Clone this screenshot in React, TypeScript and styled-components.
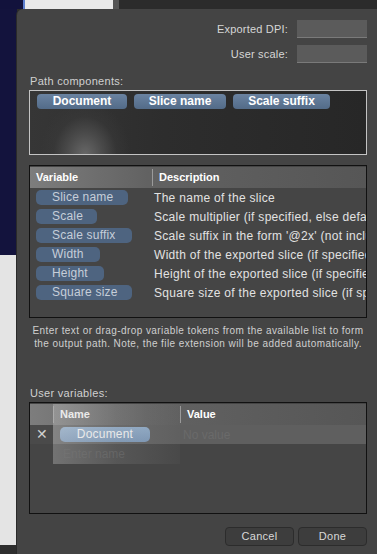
import React from "react";
import styled, {createGlobalStyle} from "styled-components";

const GlobalStyle = createGlobalStyle`
    *, *::before, *::after {box-sizing: border-box;}
    html, body {margin: 0; padding: 0; background: #e6e6e6;}
    body {font-family: "Liberation Sans", Arial, sans-serif;}
`;

const Screen = styled.div`
    width: 377px;
    height: 554px;
    overflow: hidden;
    display: flex;
    flex-direction: column;
    background: #2c2c2c;
`;
const TopStrip = styled.div`
    height: 9px;
    display: flex;
    flex-shrink: 0;
`;
const Segment = styled.div<{ $w?: number; $bg: string }>`
    ${p => p.$w ? `width: ${p.$w}px; flex-shrink: 0;` : 'flex: 1;'}
    background: ${p => p.$bg};
`;
const Body = styled.div`
    flex: 1;
    display: flex;
    min-height: 0;
`;
const LeftStrip = styled.div`
    width: 17px;
    flex-shrink: 0;
    display: flex;
    flex-direction: column;
`;
const StripPart = styled.div<{ $h?: number; $bg: string }>`
    ${p => p.$h ? `height: ${p.$h}px; flex-shrink: 0;` : 'flex: 1;'}
    background: ${p => p.$bg};
`;
const Panel = styled.div`
    flex: 1;
    background: #444444;
    border-top-left-radius: 6px;
    padding: 11px 10px 0 12px;
    display: flex;
    flex-direction: column;
    color: #d6d6d6;
    font-size: 11px;
    box-shadow: -1px 0 0 #2a2a2a;
`;
const FieldRow = styled.div`
    display: flex;
    justify-content: flex-end;
    align-items: center;
    gap: 9px;
    height: 18px;
    margin-bottom: 7px;
    letter-spacing: 0.2px;
`;
const FieldInput = styled.div`
    width: 70px;
    height: 18px;
    background: #5b5b5b;
    border-bottom: 1px solid #7a7a7a;
`;
const SectionLabel = styled.div<{ $top: number }>`
    margin-top: ${p => p.$top}px;
    margin-bottom: 2px;
    line-height: 13px;
    padding-left: 1px;
    color: #d0d0d0;
    letter-spacing: 0.3px;
`;
const PathBox = styled.div`
    height: 65px;
    border: 1px solid #c4c4c4;
    background: radial-gradient(ellipse 45px 55px at 55px 64px, #686868 0%, #4a4a4a 40%, rgba(60, 60, 60, 0.4) 70%, transparent 100%),
    linear-gradient(90deg, #363636 0%, #2d2d2d 40%, #272727 100%);
    padding: 3px 7px;
    display: flex;
    align-items: flex-start;
    gap: 7px;
`;
const PathToken = styled.div<{ $w: number }>`
    width: ${p => p.$w}px;
    height: 15px;
    border-radius: 4px;
    background: linear-gradient(180deg, #6a83a1 0%, #536b88 100%);
    color: #fff;
    font-weight: bold;
    font-size: 12px;
    line-height: 15px;
    text-align: center;
`;
const Table = styled.div<{ $h: number; $top: number }>`
    margin-top: ${p => p.$top}px;
    height: ${p => p.$h}px;
    flex-shrink: 0;
    border: 1px solid #111;
    background: #454545;
    position: relative;
    overflow: hidden;
    display: flex;
    flex-direction: column;
`;
const HeaderRow = styled.div<{ $cols: string }>`
    height: 21px;
    flex-shrink: 0;
    margin-top: 1px;
    display: grid;
    grid-template-columns: ${p => p.$cols};
    background: linear-gradient(90deg, #7d7d7d 0%, #626262 35%, #565656 100%);
    color: #fff;
    font-weight: bold;
    font-size: 11px;
`;
const HeadCell = styled.div<{ $divider?: boolean }>`
    padding-left: 6px;
    border-left: ${p => p.$divider ? '1px solid #9a9a9a' : 'none'};
    height: 17px;
    line-height: 17px;
    margin-top: 2px;
    white-space: nowrap;
`;
const VarRow = styled.div`
    height: 19px;
    flex-shrink: 0;
    display: grid;
    grid-template-columns: 122px 1fr;
    align-items: center;
    font-size: 12px;
    white-space: nowrap;
    overflow: hidden;
`;
const VarToken = styled.div<{ $w: number }>`
    margin-left: 6px;
    width: ${p => p.$w}px;
    height: 15px;
    border-radius: 5px;
    background: #4e6480;
    color: #c6ced9;
    line-height: 15px;
    padding-left: 16px;
    letter-spacing: 0.2px;
`;
const Desc = styled.div`
    color: #e2e2e2;
    padding-left: 2px;
    overflow: hidden;
    letter-spacing: 0.3px;
`;
const Help = styled.div`
    margin-top: 7px;
    height: 25px;
    text-align: center;
    font-size: 10px;
    line-height: 12.5px;
    color: #cfcfcf;
    letter-spacing: 0.42px;
    white-space: nowrap;
`;
const UserRow = styled.div`
    height: 19px;
    flex-shrink: 0;
    display: grid;
    grid-template-columns: 23px 1fr;
    align-items: center;
`;
const RemoveCell = styled.div`
    height: 19px;
    background: #4a4a4a;
    color: #cfcfcf;
    font-size: 14px;
    line-height: 19px;
    text-align: center;
`;
const RowBand = styled.div`
    height: 19px;
    background: #5f5f5f;
    display: grid;
    grid-template-columns: 127px 1fr;
    align-items: center;
`;
const UserToken = styled.div`
    margin-left: 7px;
    width: 90px;
    height: 15px;
    border-radius: 5px;
    background: linear-gradient(180deg, #93b0cf 0%, #7d9bbd 100%);
    color: #fff;
    font-size: 12px;
    line-height: 15px;
    text-align: center;
    letter-spacing: 0.2px;
`;
const Placeholder = styled.div`
    color: #6a6a6a;
    font-size: 12px;
    padding-left: 3px;
`;
const DragGhost = styled.div`
    position: absolute;
    left: 23px;
    top: 1px;
    width: 127px;
    height: 60px;
    background: linear-gradient(90deg, rgba(200, 200, 200, 0.35) 0%, rgba(150, 150, 150, 0.22) 50%, rgba(100, 100, 100, 0.12) 100%);
    pointer-events: none;
    display: flex;
    align-items: flex-end;
`;
const GhostText = styled.div`
    height: 19px;
    line-height: 19px;
    padding-left: 10px;
    font-size: 12px;
    color: rgba(120, 120, 120, 0.45);
`;
const ButtonRow = styled.div`
    margin-top: 13px;
    display: flex;
    justify-content: flex-end;
    gap: 4px;
`;
const Button = styled.div`
    width: 69px;
    height: 19px;
    border: 1px solid #2c2c2c;
    border-radius: 4px;
    background: #3d3d3d;
    color: #d8d8d8;
    font-size: 11px;
    line-height: 17px;
    text-align: center;
    letter-spacing: 0.3px;
`;

const variables = [
    {name: 'Slice name', w: 92, desc: 'The name of the slice'},
    {name: 'Scale', w: 61, desc: 'Scale multiplier (if specified, else default)'},
    {name: 'Scale suffix', w: 96, desc: "Scale suffix in the form '@2x' (not included)"},
    {name: 'Width', w: 64, desc: 'Width of the exported slice (if specified)'},
    {name: 'Height', w: 68, desc: 'Height of the exported slice (if specified)'},
    {name: 'Square size', w: 96, desc: 'Square size of the exported slice (if specified)'},
];

export default function App() {
    return (
        <Screen>
            <GlobalStyle/>
            <TopStrip>
                <Segment $w={23} $bg="#12123c"/>
                <Segment $w={2} $bg="#5d7fd0"/>
                <Segment $w={88} $bg="#e9e9e9"/>
                <Segment $w={6} $bg="#555"/>
                <Segment $bg="#2b2b2b"/>
            </TopStrip>
            <Body>
                <LeftStrip>
                    <StripPart $h={246} $bg="#13133d"/>
                    <StripPart $bg="#e4e4e4"/>
                    <StripPart $h={9} $bg="#2e2e2e"/>
                </LeftStrip>
                <Panel>
                    <FieldRow>Exported DPI: <FieldInput/></FieldRow>
                    <FieldRow>User scale: <FieldInput/></FieldRow>
                    <SectionLabel $top={5}>Path components:</SectionLabel>
                    <PathBox>
                        <PathToken $w={90}>Document</PathToken>
                        <PathToken $w={92}>Slice name</PathToken>
                        <PathToken $w={97}>Scale suffix</PathToken>
                    </PathBox>
                    <Table $h={153} $top={10}>
                        <HeaderRow $cols="122px 1fr">
                            <HeadCell>Variable</HeadCell>
                            <HeadCell $divider>Description</HeadCell>
                        </HeaderRow>
                        {variables.map(v => (
                            <VarRow key={v.name}>
                                <VarToken $w={v.w}>{v.name}</VarToken>
                                <Desc>{v.desc}</Desc>
                            </VarRow>
                        ))}
                    </Table>
                    <Help>
                        Enter text or drag-drop variable tokens from the available list to form<br/>
                        the output path. Note, the file extension will be added automatically.
                    </Help>
                    <SectionLabel $top={37}>User variables:</SectionLabel>
                    <Table $h={112} $top={0}>
                        <HeaderRow $cols="23px 127px 1fr">
                            <HeadCell/>
                            <HeadCell $divider>Name</HeadCell>
                            <HeadCell $divider>Value</HeadCell>
                        </HeaderRow>
                        <UserRow>
                            <RemoveCell>✕</RemoveCell>
                            <RowBand>
                                <UserToken>Document</UserToken>
                                <Placeholder>No value</Placeholder>
                            </RowBand>
                        </UserRow>
                        <DragGhost>
                            <GhostText>Enter name</GhostText>
                        </DragGhost>
                    </Table>
                    <ButtonRow>
                        <Button>Cancel</Button>
                        <Button>Done</Button>
                    </ButtonRow>
                </Panel>
            </Body>
        </Screen>
    );
}
